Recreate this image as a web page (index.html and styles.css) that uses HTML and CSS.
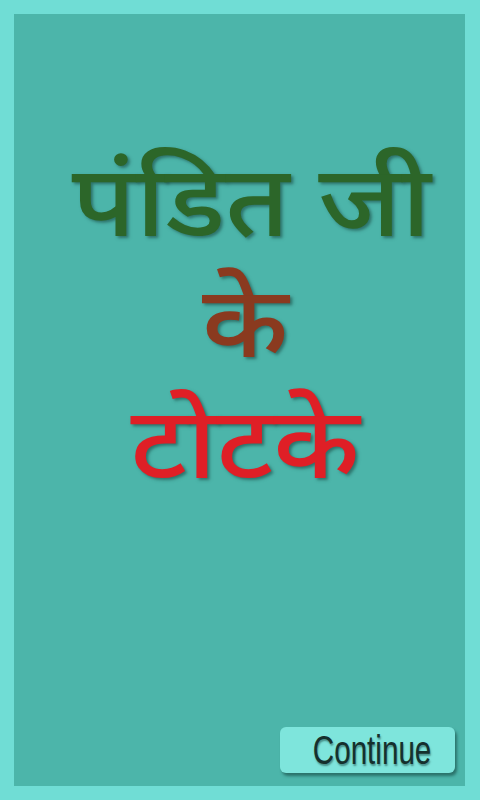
FILE: index.html
```html
<!DOCTYPE html>
<html lang="hi">
<head>
<meta charset="utf-8">
<title>पंडित जी के टोटके</title>
<link rel="stylesheet" href="styles.css">
</head>
<body>
<div class="screen">
  <div class="title">
    <div class="line green">पंडित जी</div>
    <div class="line brown">के</div>
    <div class="line red">टोटके</div>
  </div>
  <button class="continue"><span class="label">Continue</span></button>
</div>
</body>
</html>
```
FILE: styles.css
```css
html, body {
  margin: 0;
  padding: 0;
}
body {
  background: #70ddd5;
  width: 480px;
  height: 800px;
  padding: 14px 15px 14px 14px;
  box-sizing: border-box;
}
.screen {
  background: #4cb5aa;
  height: 100%;
  display: flex;
  flex-direction: column;
}
.title {
  padding-top: 137px;
  padding-left: 12px;
  display: flex;
  flex-direction: column;
  align-items: center;
  font-family: "Noto Sans Devanagari", "Lohit Devanagari", "FreeSans", "Noto Sans", sans-serif;
  font-size: 100px;
  font-weight: 500;
  line-height: 121px;
}
.line {
  transform: scaleX(1.1);
  text-shadow: 2px 2px 3px rgba(20, 60, 55, 0.55);
}
.green { color: #2c6629; margin-left: 12px; }
.brown { color: #8a3a1f; }
.red { color: #df1f26; }
.continue {
  margin-top: auto;
  align-self: flex-end;
  margin-right: 10px;
  margin-bottom: 13px;
  width: 175px;
  height: 46px;
  border: none;
  border-radius: 6px;
  background: #7ee5dc;
  box-shadow: 2px 3px 3px rgba(20, 70, 65, 0.6);
  padding: 0 0 0 10px;
  display: flex;
  align-items: center;
  justify-content: center;
}
.label {
  font-family: "Liberation Sans", Arial, sans-serif;
  font-size: 40px;
  color: #15302d;
  display: inline-block;
  transform: scaleX(0.74);
  text-shadow: 1px 2px 2px rgba(20, 60, 55, 0.5);
}
```
